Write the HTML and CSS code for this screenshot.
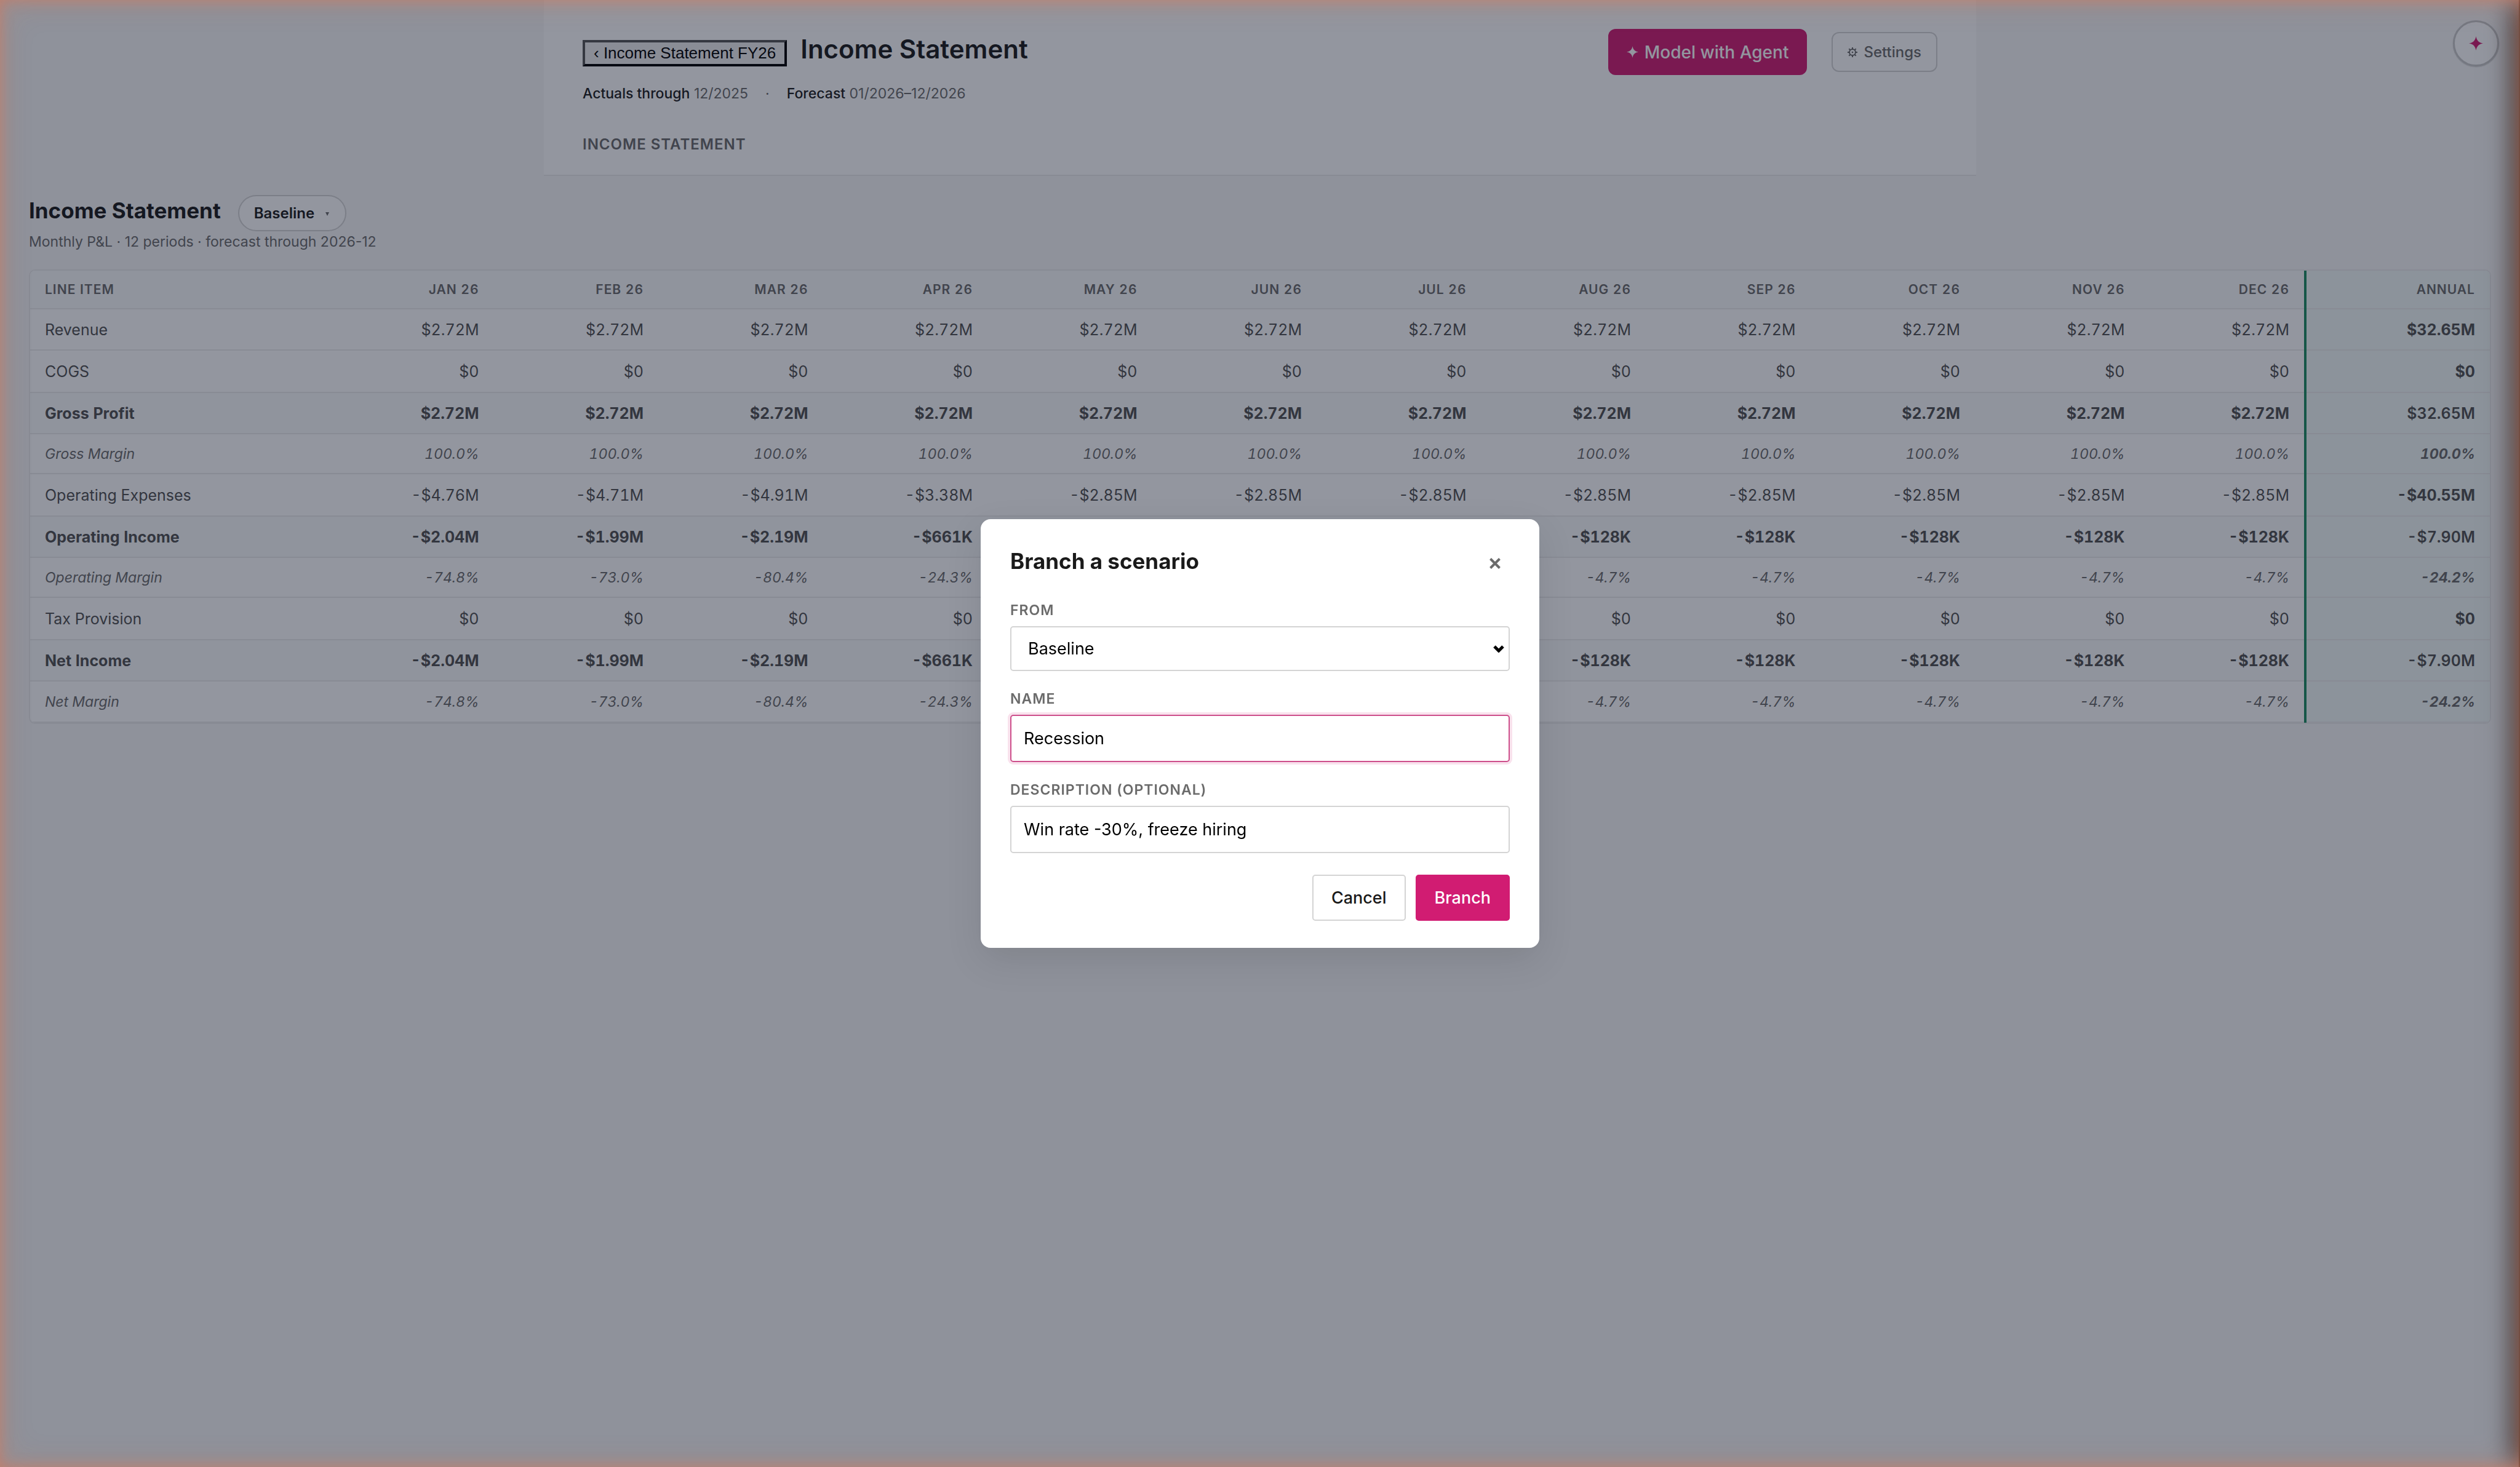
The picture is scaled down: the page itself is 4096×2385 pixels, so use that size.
FILE: index.html
```
<!DOCTYPE html>
<html lang="en">
<head>
<meta charset="utf-8">
<meta name="viewport" content="width=device-width, initial-scale=1">
<title>Income Statement</title>
<link rel="stylesheet" href="styles.css">
</head>
<body>
<header class="topbar">
  <div class="topbar-row">
    <div class="crumbs">
      <button class="back" type="button">‹ Income Statement FY26</button>
      <h1 class="page-title">Income Statement</h1>
    </div>
    <div class="actions">
      <button class="btn-agent" type="button">
        <svg class="spark" viewBox="0 0 20 20" aria-hidden="true"><path d="M10 0C11 6 14 9 20 10C14 11 11 14 10 20C9 14 6 11 0 10C6 9 9 6 10 0Z"/></svg>
        Model with Agent
      </button>
      <button class="btn-settings" type="button">
        <svg class="gear" viewBox="0 0 16 16" aria-hidden="true"><circle cx="8" cy="8" r="5" fill="none" stroke-width="2"/><circle class="gear-dot" cx="8" cy="8" r="1.3"/><path d="M8 0V3M8 13V16M0 8H3M13 8H16M2.3 2.3L4.4 4.4M11.6 11.6L13.7 13.7M2.3 13.7L4.4 11.6M11.6 4.4L13.7 2.3" stroke-width="2"/></svg>
        Settings
      </button>
    </div>
  </div>
  <div class="meta">
    <span><b>Actuals through</b> 12/2025</span>
    <span>·</span>
    <span><b>Forecast</b> 01/2026–12/2026</span>
  </div>
  <div class="section-label">INCOME STATEMENT</div>
</header>

<main class="content">
  <div class="heading">
    <h2 class="heading-title">Income Statement</h2>
    <button class="pill" type="button">Baseline
      <svg class="caret" viewBox="0 0 6 6" aria-hidden="true"><path d="M0 0H6L3 6Z"/></svg>
    </button>
  </div>
  <p class="subtitle">Monthly P&amp;L · 12 periods · forecast through 2026-12</p>

  <div class="table-card">
    <table class="statement">
      <colgroup><col class="col-item"><col span="12"><col class="col-annual"></colgroup>
      <thead>
        <tr><th>LINE ITEM</th><th>JAN 26</th><th>FEB 26</th><th>MAR 26</th><th>APR 26</th><th>MAY 26</th><th>JUN 26</th><th>JUL 26</th><th>AUG 26</th><th>SEP 26</th><th>OCT 26</th><th>NOV 26</th><th>DEC 26</th><th>ANNUAL</th></tr>
      </thead>
      <tbody>
        <tr><td>Revenue</td><td>$2.72M</td><td>$2.72M</td><td>$2.72M</td><td>$2.72M</td><td>$2.72M</td><td>$2.72M</td><td>$2.72M</td><td>$2.72M</td><td>$2.72M</td><td>$2.72M</td><td>$2.72M</td><td>$2.72M</td><td>$32.65M</td></tr>
        <tr class="pre-total"><td>COGS</td><td>$0</td><td>$0</td><td>$0</td><td>$0</td><td>$0</td><td>$0</td><td>$0</td><td>$0</td><td>$0</td><td>$0</td><td>$0</td><td>$0</td><td>$0</td></tr>
        <tr class="total"><td>Gross Profit</td><td>$2.72M</td><td>$2.72M</td><td>$2.72M</td><td>$2.72M</td><td>$2.72M</td><td>$2.72M</td><td>$2.72M</td><td>$2.72M</td><td>$2.72M</td><td>$2.72M</td><td>$2.72M</td><td>$2.72M</td><td>$32.65M</td></tr>
        <tr class="margin"><td>Gross Margin</td><td>100.0%</td><td>100.0%</td><td>100.0%</td><td>100.0%</td><td>100.0%</td><td>100.0%</td><td>100.0%</td><td>100.0%</td><td>100.0%</td><td>100.0%</td><td>100.0%</td><td>100.0%</td><td>100.0%</td></tr>
        <tr class="pre-total"><td>Operating Expenses</td><td>-$4.76M</td><td>-$4.71M</td><td>-$4.91M</td><td>-$3.38M</td><td>-$2.85M</td><td>-$2.85M</td><td>-$2.85M</td><td>-$2.85M</td><td>-$2.85M</td><td>-$2.85M</td><td>-$2.85M</td><td>-$2.85M</td><td>-$40.55M</td></tr>
        <tr class="total"><td>Operating Income</td><td>-$2.04M</td><td>-$1.99M</td><td>-$2.19M</td><td>-$661K</td><td>-$128K</td><td>-$128K</td><td>-$128K</td><td>-$128K</td><td>-$128K</td><td>-$128K</td><td>-$128K</td><td>-$128K</td><td>-$7.90M</td></tr>
        <tr class="margin"><td>Operating Margin</td><td>-74.8%</td><td>-73.0%</td><td>-80.4%</td><td>-24.3%</td><td>-4.7%</td><td>-4.7%</td><td>-4.7%</td><td>-4.7%</td><td>-4.7%</td><td>-4.7%</td><td>-4.7%</td><td>-4.7%</td><td>-24.2%</td></tr>
        <tr class="pre-total"><td>Tax Provision</td><td>$0</td><td>$0</td><td>$0</td><td>$0</td><td>$0</td><td>$0</td><td>$0</td><td>$0</td><td>$0</td><td>$0</td><td>$0</td><td>$0</td><td>$0</td></tr>
        <tr class="total"><td>Net Income</td><td>-$2.04M</td><td>-$1.99M</td><td>-$2.19M</td><td>-$661K</td><td>-$128K</td><td>-$128K</td><td>-$128K</td><td>-$128K</td><td>-$128K</td><td>-$128K</td><td>-$128K</td><td>-$128K</td><td>-$7.90M</td></tr>
        <tr class="margin"><td>Net Margin</td><td>-74.8%</td><td>-73.0%</td><td>-80.4%</td><td>-24.3%</td><td>-4.7%</td><td>-4.7%</td><td>-4.7%</td><td>-4.7%</td><td>-4.7%</td><td>-4.7%</td><td>-4.7%</td><td>-4.7%</td><td>-24.2%</td></tr>
      </tbody>
    </table>
  </div>
</main>

<button class="agent-toggle" type="button" aria-label="Open agent">
  <svg class="spark-lg" viewBox="0 0 20 20" aria-hidden="true"><path d="M10 0C11 6 14 9 20 10C14 11 11 14 10 20C9 14 6 11 0 10C6 9 9 6 10 0Z"/></svg>
</button>

<div class="overlay">
  <form class="modal" role="dialog" aria-modal="true" aria-labelledby="modal-title">
    <div class="modal-head">
      <h2 class="modal-title" id="modal-title">Branch a scenario</h2>
      <button class="close" type="button" aria-label="Close">
        <svg class="close-icon" viewBox="0 0 18 18" aria-hidden="true"><path d="M1.5 1.5L16.5 16.5M16.5 1.5L1.5 16.5"/></svg>
      </button>
    </div>
    <div class="field">
      <label class="label" for="from">FROM</label>
      <div class="select-wrap">
        <select class="control select" id="from"><option>Baseline</option></select>
        <svg class="chevron" viewBox="0 0 18 12" aria-hidden="true"><path d="M2 2L9 9L16 2"/></svg>
      </div>
    </div>
    <div class="field">
      <label class="label" for="name">NAME</label>
      <input class="control text active" id="name" type="text" value="Recession">
    </div>
    <div class="field">
      <label class="label" for="desc">DESCRIPTION (OPTIONAL)</label>
      <input class="control text" id="desc" type="text" value="Win rate -30%, freeze hiring">
    </div>
    <div class="modal-actions">
      <button class="btn" type="button">Cancel</button>
      <button class="btn btn-primary" type="submit">Branch</button>
    </div>
  </form>
</div>

<div class="frame"><div class="drawer"></div></div>
<div class="glow"></div>
</body>
</html>
```
FILE: styles.css
```
:root {
  --ink: #1a1a1a;
  --body: #505050;
  --muted: #6b6b6b;
  --line: #ececec;
  --border: #d4d4d4;
  --accent: #d11c72;
  --green: #1a8a5f;
}

* { box-sizing: border-box; }

body {
  margin: 0;
  min-height: 100vh;
  background: #f7f7f7;
  color: var(--ink);
  font-family: Inter, "Liberation Sans", sans-serif;
}

h1, h2, p { margin: 0; }
button, input, select { font-family: inherit; margin: 0; }

/* Top bar */
.topbar {
  max-width: 2328px;
  margin: 0 auto;
  padding: 47px 63px 31px;
  background: #fff;
  border-bottom: 2px solid var(--line);
}
.topbar-row { display: flex; justify-content: space-between; align-items: flex-start; }
.crumbs { display: flex; align-items: baseline; gap: 22px; padding-top: 7px; }
.back {
  height: 43px;
  padding: 0 14px;
  border: 4px outset #000;
  background: #efefef;
  color: #000;
  font: 26px/30px "Liberation Sans", Arial, sans-serif;
}
.page-title { font-size: 42px; line-height: 52px; font-weight: 600; }
.actions { display: flex; align-items: center; gap: 40px; }
.btn-agent, .btn-settings { display: flex; align-items: center; gap: 10px; border-radius: 12px; font-weight: 500; }
.btn-agent { height: 75px; padding: 0 30px; border: 0; background: var(--accent); color: #fff; font-size: 28px; }
.btn-settings { height: 65px; padding: 0 24px; border: 2px solid var(--border); background: #fff; color: var(--muted); font-size: 24px; }
.spark { width: 19px; height: 19px; fill: currentColor; }
.gear { width: 16px; height: 16px; stroke: currentColor; }
.gear-dot { fill: currentColor; stroke: none; }
.meta { display: flex; gap: 28px; margin-top: 12px; color: var(--muted); font-size: 23px; line-height: 36px; }
.meta b { color: var(--ink); font-weight: 500; }
.section-label { margin-top: 47px; color: var(--muted); font-size: 24px; line-height: 36px; font-weight: 600; letter-spacing: 1px; }

/* Statement */
.content { padding: 31px 47px; }
.heading { display: flex; align-items: baseline; gap: 28px; }
.heading-title { font-size: 35px; line-height: 42px; font-weight: 700; }
.pill {
  display: flex;
  align-items: center;
  gap: 18px;
  height: 59px;
  padding: 0 26px 0 24px;
  border: 2px solid var(--border);
  border-radius: 30px;
  background: #fff;
  color: var(--ink);
  font-size: 24px;
  font-weight: 600;
}
.caret { width: 6px; height: 6px; margin-top: 3px; fill: var(--muted); }
.subtitle { color: var(--muted); font-size: 23px; line-height: 35px; }

.table-card { margin-top: 27px; border: 2px solid var(--line); border-radius: 10px; background: #fff; overflow: hidden; }
.statement { width: 100%; table-layout: fixed; border-collapse: separate; border-spacing: 0; font-variant-numeric: tabular-nums; }
.col-item { width: 486px; }
.col-annual { width: 302px; }
.statement th, .statement td { height: 67px; padding: 0 24px; border-bottom: 2px solid var(--line); text-align: right; white-space: nowrap; }
.statement th { height: 63px; background: #fafbfb; color: var(--muted); font-size: 21px; font-weight: 600; letter-spacing: 1px; }
.statement td { color: var(--body); font-size: 25px; }
.statement th:first-child, .statement td:first-child { text-align: left; }
.statement .pre-total td { height: 69px; }
.statement .total td { background: #fafbfb; font-weight: 700; }
.statement .margin td { height: 65px; color: var(--muted); font-size: 23px; font-style: italic; }
.statement tr:last-child td { height: 67px; }
.statement th:last-child, .statement td:last-child { position: relative; background: #f2faf7; }
.statement th:last-child::before, .statement td:last-child::before { content: ""; position: absolute; top: 0; bottom: -2px; left: 0; width: 4px; background: var(--green); }
.statement td:last-child { font-weight: 700; }
.statement .total td:last-child { font-weight: 600; background: #f2faf7; }

/* Floating agent button */
.agent-toggle {
  position: fixed;
  top: 33px;
  right: 34px;
  display: grid;
  place-items: center;
  width: 75px;
  height: 75px;
  padding: 0;
  border: 3px solid #c8c8c8;
  border-radius: 50%;
  background: #fff;
  color: var(--accent);
  box-shadow: 0 1px 2px rgba(0, 0, 0, .2);
}
.spark-lg { width: 23px; height: 23px; fill: currentColor; }

/* Modal */
.overlay { position: fixed; inset: 0; display: flex; align-items: center; justify-content: center; background: rgba(15, 23, 42, .45); }
.modal { width: 908px; padding: 48px 48px 44px; border-radius: 16px; background: #fff; box-shadow: 0 20px 60px rgba(0, 0, 0, .1); }
.modal-head { display: flex; justify-content: space-between; align-items: flex-start; margin-bottom: 38px; }
.modal-title { font-size: 35px; line-height: 40px; font-weight: 700; }
.close { display: grid; place-items: center; width: 48px; height: 48px; padding: 0; border: 0; background: none; color: var(--muted); }
.close-icon { width: 18px; height: 18px; fill: none; stroke: currentColor; stroke-width: 4; }
.field { display: flex; flex-direction: column; gap: 12px; margin-bottom: 31px; }
.label { color: var(--muted); font-size: 23px; line-height: 28px; font-weight: 600; letter-spacing: 1px; }
.control { width: 100%; border: 2px solid var(--border); border-radius: 5px; background: #fff; color: #000; font-size: 27px; }
.select-wrap { display: grid; align-items: center; }
.select { grid-area: 1 / 1; height: 73px; padding: 0 27px; appearance: none; }
.chevron { grid-area: 1 / 1; justify-self: end; width: 18px; height: 12px; margin-right: 9px; fill: none; stroke: #000; stroke-width: 5; pointer-events: none; }
.text { height: 77px; padding: 0 20px; outline: none; }
.active { border-color: #cd4f8b; box-shadow: 0 0 0 4px #f9e2ed; }
.modal-actions { display: flex; justify-content: flex-end; gap: 16px; padding-top: 4px; }
.btn { height: 75px; padding: 0 29px; border: 2px solid var(--border); border-radius: 5px; background: #fff; color: var(--ink); font-size: 27px; font-weight: 500; }
.btn-primary { border-color: var(--accent); background: var(--accent); color: #fff; }

/* Closed drawer at the right edge, and the glow round the window */
.frame, .glow { position: fixed; inset: 0; overflow: hidden; pointer-events: none; }
.drawer { width: 900px; height: 100%; margin-left: calc(100% - 2px); background: #383838; box-shadow: 0 0 48px #000; }
.glow {
  box-shadow:
    inset 0 0 20px rgba(217, 119, 87, .5),
    inset 0 0 40px rgba(217, 119, 87, .3),
    inset 0 0 60px rgba(217, 119, 87, .1);
}
```
